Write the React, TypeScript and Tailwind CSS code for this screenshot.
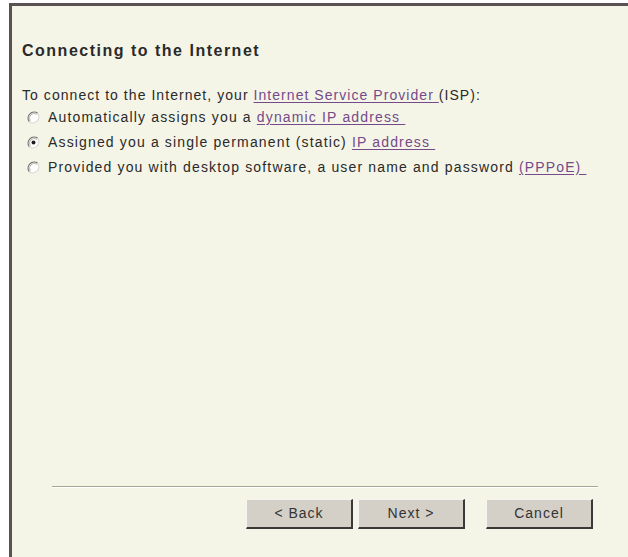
import React from "react";

const font = { fontFamily: '"Liberation Sans", Arial, sans-serif' };

function Radio({ checked }: { checked?: boolean }) {
  return (
    <svg width="13" height="13" viewBox="0 0 13 13" className="shrink-0">
      <circle cx="6.5" cy="6.5" r="6" fill="#ffffff" />
      {/* sunken edge: dark upper-left, light lower-right */}
      <path d="M2.3 10.7 A6 6 0 0 1 10.7 2.3" fill="none" stroke="#767672" strokeWidth="1.3" />
      <path d="M3.3 9.7 A4.6 4.6 0 0 1 9.7 3.3" fill="none" stroke="#b4b4ac" strokeWidth="1" />
      <path d="M10.7 2.3 A6 6 0 0 1 2.3 10.7" fill="none" stroke="#d8d8d0" strokeWidth="1.3" />
      {checked && <circle cx="6.5" cy="6.5" r="2" fill="#1e1e1e" />}
    </svg>
  );
}

function Lnk({ children }: { children: React.ReactNode }) {
  return <span className="text-[#744a8a] underline underline-offset-[2px]">{children}</span>;
}

function Btn({ label }: { label: string }) {
  return (
    <button className="h-[30px] w-[107px] border-t border-l border-[#f4f4f0] border-r-2 border-b-2 border-r-[#3c3838] border-b-[#3c3838] bg-[#d4d0c8] text-[14px] tracking-[1px] text-[#333]">
      {label}
    </button>
  );
}

const options = [
  { checked: false, text: "Automatically assigns you a ", link: "dynamic IP address\u00a0" },
  { checked: true, text: "Assigned you a single permanent (static) ", link: "IP address\u00a0" },
  {
    checked: false,
    text: "Provided you with desktop software, a user name and password ",
    link: "(PPPoE)\u00a0",
  },
];

export default function App() {
  return (
    <div className="flex h-[557px] w-[628px] flex-col bg-white pl-[9px] pt-[3px]" style={font}>
      <div className="flex flex-1 flex-col border-l-[3px] border-t-[3px] border-[#5a5252] bg-[#f5f5e7] text-[#2a2a2a]">
        <div className="pl-[10px] pt-[36px]">
          <h1 className="text-[16px] font-bold leading-[18px] tracking-[1.5px]">Connecting to the Internet</h1>
          <p className="mt-[27px] text-[14px] leading-[16px] tracking-[1.05px]">
            To connect to the Internet, your <Lnk>Internet Service Provider </Lnk>(ISP):
          </p>
          <div className="mt-[2px] flex flex-col">
            {options.map((o) => (
              <div
                key={o.link}
                className="flex h-[25px] items-center gap-[8px] pl-[5px] text-[14px] tracking-[1.15px]"
              >
                <Radio checked={o.checked} />
                <span>
                  {o.text}
                  <Lnk>{o.link}</Lnk>
                </span>
              </div>
            ))}
          </div>
        </div>

        <div className="flex-1" />

        <div className="ml-[40px] mr-[30px] border-t border-b border-t-[#a8a890] border-b-white" />

        <div className="mb-[28px] mr-[35px] mt-[11px] flex justify-end">
          <Btn label="< Back" />
          <div className="ml-[5px]">
            <Btn label="Next >" />
          </div>
          <div className="ml-[21px]">
            <Btn label="Cancel" />
          </div>
        </div>
      </div>
    </div>
  );
}
